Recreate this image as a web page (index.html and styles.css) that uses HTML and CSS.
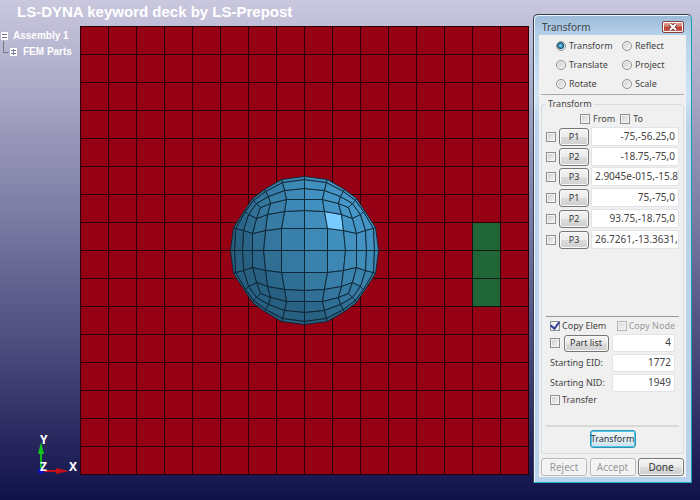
FILE: index.html
```html
<!DOCTYPE html>
<html lang="en">
<head>
<meta charset="utf-8">
<title>LS-DYNA keyword deck by LS-Prepost</title>
<link rel="stylesheet" href="styles.css">
</head>
<body>
<main class="scene">
  <h1 class="title">LS-DYNA keyword deck by LS-Prepost</h1>
  <aside class="side">
    <nav class="tree">
      <div class="node"><svg class="mark" viewBox="0 0 8 8"><path fill="#fff" d="M0 0h7v8H0z"/><path stroke="#77779a" d="M1 2.5h5M1 5.5h5"/></svg>Assembly 1</div>
      <div class="node child"><svg class="branch" viewBox="0 0 6 14"><path fill="none" stroke="#777" d="M.5 -3v11.500h5"/></svg><svg class="mark" viewBox="0 0 8 8"><path fill="#fff" d="M0 0h7v8H0z"/><path stroke="#77779a" d="M1 2.500h5M1 5.500h5M3.500 1v6"/></svg>FEM Parts</div>
    </nav>
    <svg class="axes" viewBox="0 0 50 46">
      <path stroke="#10b818" stroke-width="2" d="M9 37V15"/><path fill="#13c41b" d="M9 8l3 12H6z"/>
      <path stroke="#c01018" stroke-width="2" d="M9 37h18"/><path fill="#c01018" d="M37 37l-13-3v6z"/>
      <circle cx="9" cy="37" r="3" fill="#1010c8"/>
      <text x="8" y="10">Y</text><text x="8" y="37">Z</text><text x="37" y="37">X</text>
    </svg>
  </aside>
  <svg class="mesh" id="mesh" viewBox="0 0 449 449" role="img" aria-label="Plate and sphere mesh"></svg>
  <form class="dialog">
    <header class="bar"><h2>Transform</h2><button type="button" class="close" aria-label="Close"><svg viewBox="0 0 10 8"><path stroke="#6b3030" stroke-width="3.500" d="M2 1l6 6M8 1L2 7"/><path stroke="#fff" stroke-width="2" d="M2 1l6 6M8 1L2 7"/></svg></button></header>
    <div class="body">
      <div class="modes">
        <label><input type="radio" name="mode" checked>Transform</label><label><input type="radio" name="mode">Reflect</label>
        <label><input type="radio" name="mode">Translate</label><label><input type="radio" name="mode">Project</label>
        <label><input type="radio" name="mode">Rotate</label><label><input type="radio" name="mode">Scale</label>
      </div>
      <fieldset>
        <legend>Transform</legend>
        <div class="panel">
          <div class="ends"><label><input type="checkbox">From</label><label><input type="checkbox">To</label></div>
          <div class="points">
            <div class="point"><input type="checkbox" aria-label="Use from P1"><button type="button">P1</button><input type="text" aria-label="From P1" value="-75,-56.25,0"></div>
            <div class="point"><input type="checkbox" aria-label="Use from P2"><button type="button">P2</button><input type="text" aria-label="From P2" value="-18.75,-75,0"></div>
            <div class="point"><input type="checkbox" aria-label="Use from P3"><button type="button">P3</button><input type="text" class="full" aria-label="From P3" value="2.9045e-015,-15.8"></div>
            <div class="point"><input type="checkbox" aria-label="Use to P1"><button type="button">P1</button><input type="text" aria-label="To P1" value="75,-75,0"></div>
            <div class="point"><input type="checkbox" aria-label="Use to P2"><button type="button">P2</button><input type="text" aria-label="To P2" value="93.75,-18.75,0"></div>
            <div class="point"><input type="checkbox" aria-label="Use to P3"><button type="button">P3</button><input type="text" class="full" aria-label="To P3" value="26.7261,-13.3631,"></div>
          </div>
          <div class="copy">
            <div class="pair"><label><input type="checkbox" checked>Copy Elem</label><label class="off"><input type="checkbox" disabled>Copy Node</label></div>
            <div class="field"><input type="checkbox" aria-label="Use part list"><button type="button">Part list</button><input type="text" aria-label="Part count" value="4"></div>
            <div class="field"><label for="eid">Starting EID:</label><input type="text" id="eid" value="1772"></div>
            <div class="field"><label for="nid">Starting NID:</label><input type="text" id="nid" value="1949"></div>
            <label><input type="checkbox">Transfer</label>
          </div>
          <div class="apply"><button type="button" class="primary">Transform</button></div>
        </div>
      </fieldset>
      <footer><button type="button" disabled>Reject</button><button type="button" disabled>Accept</button><button type="button">Done</button></footer>
    </div>
  </form>
</main>
<script src="mesh.js"></script>
</body>
</html>
```
FILE: styles.css
```css
* { box-sizing: border-box; }
body { margin: 0; font: 9px/12px "Noto Sans", sans-serif; color: #444; }
.scene {
  display: grid;
  grid-template-columns: 80px minmax(0, 1fr) 171px;
  grid-template-rows: 26px 1fr;
  min-height: 100vh;
  background: linear-gradient(#cac8de, #a9a8c6 18%, #7676a0 46%, #3b3b70 78%, #11114a);
}
.title {
  grid-area: 1 / 1 / 2 / 3;
  margin: 0;
  padding: 3px 0 0 17px;
  font: bold 15px/18px "Liberation Sans", sans-serif;
  color: #fff;
  white-space: nowrap;
}
.side {
  grid-area: 2 / 1;
  display: flex;
  flex-direction: column;
  justify-content: space-between;
  padding: 2px 0 20px;
}
.tree { font: bold 10px/16px "Liberation Sans", sans-serif; color: #fff; }
.node { display: flex; align-items: center; gap: 4px; padding-left: 1px; white-space: nowrap; }
.child { padding-left: 3px; gap: 5px; }
.child .mark { margin-left: -4px; }
.mark { width: 8px; height: 8px; flex: none; }
.branch { width: 6px; height: 14px; align-self: flex-start; flex: none; overflow: visible; }
.axes { width: 50px; height: 46px; margin-left: 32px; overflow: visible; }
.axes text { font: bold 12px "Noto Sans", sans-serif; fill: #fff; }
.mesh { grid-area: 2 / 2; width: 100%; display: block; }

.dialog {
  grid-area: 1 / 3 / 3 / 4;
  display: flex;
  flex-direction: column;
  margin: 14px 8px 17px 4px;
  padding: 0 5px 5px 5px;
  border: 1px solid #333f50;
  border-right-color: #18a0b0;
  border-bottom-color: #18b8c8;
  border-radius: 5px 5px 1px 1px;
  background: linear-gradient(#9cbbd8, #b5d0ea 20px, #d0e4f5 80px, #bad2eb 110px);
  box-shadow: inset 1px 1px #eef6fc;
}
.bar { display: flex; justify-content: space-between; align-items: center; height: 20px; padding: 4px 2px 0 3px; }
.bar h2 { margin: 0; font-size: 10px; font-weight: 400; }
.close {
  width: 22px; height: 12px;
  padding: 0;
  display: grid;
  place-items: center;
  border: 1px solid #8b4040;
  border-radius: 2px;
  background: linear-gradient(#e8b0a0, #cf7464 45%, #b53a2c 50%, #cf6656);
}
.close svg { width: 10px; height: 8px; }
.body { flex: 1; display: flex; flex-direction: column; background: #f0f0f0; padding: 1px 2px 1px; }
label { display: flex; align-items: center; gap: 3px; white-space: nowrap; }
.modes {
  display: grid;
  grid-template-columns: 66px 1fr;
  row-gap: 7px;
  padding: 4px 0 4px 15px;
  border-bottom: 1px solid #aaa;
}
input[type=radio], input[type=checkbox] {
  appearance: none;
  display: grid;
  place-items: center;
  flex: none;
  width: 10px; height: 10px;
  margin: 0;
  border: 1px solid #8e8f8f;
  background: linear-gradient(135deg, #c8ccd0, #f8f8f8);
  box-shadow: inset 0 0 0 1px #f4f4f4;
}
input[type=radio] { border-radius: 50%; }
input[type=radio]:checked { background: radial-gradient(circle at 45% 45%, #5cc8e8 0 1px, #164a70 3px, #e8eef2 4px); box-shadow: none; }
.modes label { gap: 3px; }
fieldset {
  flex: 1;
  display: flex;
  flex-direction: column;
  margin: 3px 0 0;
  min-width: 0;
  padding: 0 4px 5px;
  border: 1px solid #d2dde4;
  border-radius: 3px;
}
legend { padding: 0 2px; }
.panel { flex: 1; display: flex; flex-direction: column; height: 100%; }
.ends { display: flex; justify-content: center; gap: 5px; padding: 3px 2px 2px 0; }
.points { display: grid; grid-template-columns: minmax(0, 1fr); row-gap: 1px; }
.point { display: flex; align-items: center; }
.point button { width: 30px; height: 18px; margin: 0 2px 0 3px; flex: none; }
.point:nth-child(n+4) { margin-top: 1px; }
button {
  padding: 0;
  font: 9px/12px "Noto Sans", sans-serif;
  color: #333;
  border: 1px solid #777;
  border-radius: 3px;
  background: linear-gradient(#f4f4f4, #ebebeb 48%, #dcdcdc 52%, #cfcfcf);
  box-shadow: inset 0 0 0 1px #f8f8f8;
}
input[type=text] {
  flex: 1;
  min-width: 0;
  height: 19px;
  padding: 0 3px 2px 3px;
  border: 1px solid #e0e3e8;
  border-radius: 2px;
  background: #fff;
  font: 10px/14px "Noto Sans", sans-serif;
  color: #444;
  text-align: right;
}
input.full { padding-right: 0; text-align: left; }
.copy {
  display: grid;
  row-gap: 2px;
  margin-top: auto;
  padding: 2px 4px 19px;
  border-top: 1px solid #999;
}
.pair { display: flex; justify-content: space-between; height: 13px; }
.copy label { gap: 2px; }
.off { color: #999; }
.off input { opacity: .6; }
input[type=checkbox]:checked { background: #f4f4f4; }
input[type=checkbox]:checked::after {
  content: "";
  width: 4px; height: 7px;
  margin-top: -2px;
  border: solid #34449a;
  border-width: 0 2px 2px 0;
  transform: rotate(38deg);
}
.field { display: flex; align-items: center; justify-content: space-between; }
.field button { width: 45px; height: 17px; }
.field input[type=text] { flex: none; width: 63px; height: 18px; }
.apply { display: flex; justify-content: center; padding-top: 3px; border-top: 2px solid #d8d8d8; }
.apply button, footer button { width: 46px; height: 18px; }
.primary { border: 1px solid #3a8fb0; box-shadow: inset 0 0 0 1px #48c8ec; background: linear-gradient(#f0f8fb, #cde2ec); }
footer { display: flex; justify-content: space-between; padding-top: 4px; }
footer button { font-size: 10px; }
button:disabled { color: #999; border-color: #b4b8bb; background: #f3f3f3; }
```
FILE: mesh.js
```js
const svg = document.getElementById("mesh");
const NS = "http://www.w3.org/2000/svg";
function add(tag, attrs) {
  const el = document.createElementNS(NS, tag);
  for (const key in attrs) el.setAttribute(key, attrs[key]);
  svg.appendChild(el);
}

// Plate: 16 x 16 cells, one part of three cells in green
add("rect", { width: 449, height: 449, fill: "#960014" });
add("rect", { x: 392, y: 197, width: 28, height: 84, fill: "#206637" });
for (let i = 0; i <= 16; i++) {
  const p = i * 28 + 0.5;
  add("path", { d: `M${p} 0V449M0 ${p}H449`, stroke: "#000", "stroke-opacity": 0.72 });
}

// Sphere quadrant: inner block of nodes, then rings out to the silhouette
const grid = [
  [[0, 0], [23, 0], [41, 0], [52, 0]],
  [[0, 22], [23, 22], [39, 20], [52, 17]],
  [[0, 40], [20, 39], [37, 36], [48, 32]],
  [[0, 51], [18, 51], [34, 47], [44, 43]]
];
const rings = [
  [grid[3][0], grid[3][1], grid[3][2], grid[3][3], grid[2][3], grid[1][3], grid[0][3]],
  [[0, 62], [20, 60], [36, 54], [48, 47], [56, 36], [61, 20], [62, 0]],
  [[0, 71], [22, 68], [39, 59], [51, 50], [59, 39], [69, 22], [70, 0]],
  [[0, 74], [23, 71], [40, 61], [52, 52], [60, 40], [71, 23], [74, 0]]
];
const quads = [];
for (let j = 0; j < 3; j++)
  for (let i = 0; i < 3; i++)
    quads.push([grid[j][i], grid[j][i + 1], grid[j + 1][i + 1], grid[j + 1][i]]);
for (let r = 0; r < 3; r++)
  for (let k = 0; k < 6; k++)
    quads.push([rings[r][k], rings[r][k + 1], rings[r + 1][k + 1], rings[r + 1][k]]);

function shade(x, y) {
  const z = Math.sqrt(Math.max(0, 1 - x * x - y * y));
  const t = Math.max(0, Math.min(1, 0.5 * x - 0.45 * y + 0.4 * z + 0.15));
  const dark = [40, 96, 130], light = [72, 156, 206];
  return `rgb(${dark.map((c, i) => Math.round(c + (light[i] - c) * t)).join()})`;
}
for (const sy of [-1, 1])
  for (const sx of [-1, 1])
    quads.forEach((quad, n) => {
      const cx = quad.reduce((s, p) => s + p[0], 0) / 4 * sx / 75;
      const cy = quad.reduce((s, p) => s + p[1], 0) / 4 * sy / 75;
      const glint = n === 4 && sx === 1 && sy === -1;
      add("polygon", {
        points: quad.map(p => `${224.5 + sx * p[0]},${224.5 + sy * p[1]}`).join(" "),
        fill: glint ? "#78ccff" : shade(cx, cy),
        stroke: "#08202c", "stroke-width": 0.8, "stroke-linejoin": "round"
      });
    });
```
